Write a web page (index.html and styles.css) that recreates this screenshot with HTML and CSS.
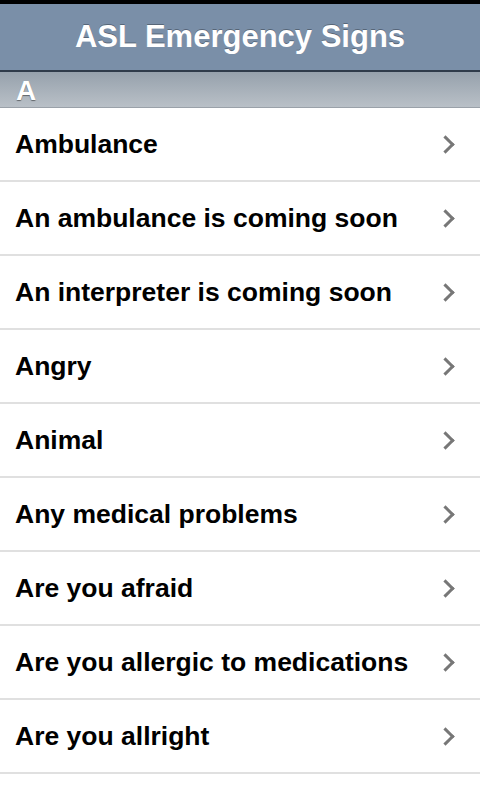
FILE: index.html
```html
<!DOCTYPE html>
<html lang="en">
  <head>
    <meta charset="UTF-8" />
    <meta name="viewport" content="width=device-width, initial-scale=1.0" />
    <title>ASL Emergency Signs</title>
    <link rel="stylesheet" href="styles.css">
  </head>
  <body>
    <div class="statusbar"></div>
    <div class="navbar">
      <h1>ASL Emergency Signs</h1>
    </div>
    <div class="section">A</div>
    <ul class="list">
      <li>Ambulance<span class="chevron"></span></li>
      <li>An ambulance is coming soon<span class="chevron"></span></li>
      <li>An interpreter is coming soon<span class="chevron"></span></li>
      <li>Angry<span class="chevron"></span></li>
      <li>Animal<span class="chevron"></span></li>
      <li>Any medical problems<span class="chevron"></span></li>
      <li>Are you afraid<span class="chevron"></span></li>
      <li>Are you allergic to medications<span class="chevron"></span></li>
      <li>Are you allright<span class="chevron"></span></li>
      <li>Are you bleeding<span class="chevron"></span></li>
    </ul>
  </body>
</html>
```

FILE: styles.css
```css
body {
  margin: 0;
  font-family: "Liberation Sans", Arial, sans-serif;
  background-color: #fff;
  height: 800px;
  overflow: hidden;
}
.statusbar {
  height: 4px;
  background-color: #000;
}
.navbar {
  height: 66px;
  background-color: #7a8fa8;
  border-bottom: 2px solid #2f3b4a;
  display: flex;
  align-items: center;
  justify-content: center;
}
.navbar h1 {
  margin: 0;
  color: #fff;
  font-size: 31px;
  font-weight: bold;
  text-shadow: 0 -1px 0 rgba(0, 0, 0, 0.3);
}
.section {
  height: 35px;
  line-height: 38px;
  padding-left: 16px;
  background: linear-gradient(#96a1ac, #b9c0c7);
  border-bottom: 1px solid #9aa1a9;
  color: #fff;
  font-size: 28px;
  font-weight: bold;
  text-shadow: 0 1px 1px rgba(0, 0, 0, 0.45);
}
.list {
  list-style: none;
  margin: 0;
  padding: 0;
}
.list li {
  height: 72px;
  border-bottom: 2px solid #e0e0e0;
  display: flex;
  align-items: center;
  justify-content: space-between;
  padding: 0 28px 0 15px;
  font-size: 26.5px;
  font-weight: bold;
  color: #000;
}
.chevron {
  width: 10px;
  height: 10px;
  border-top: 3px solid #777;
  border-right: 3px solid #777;
  transform: rotate(45deg);
}
```
